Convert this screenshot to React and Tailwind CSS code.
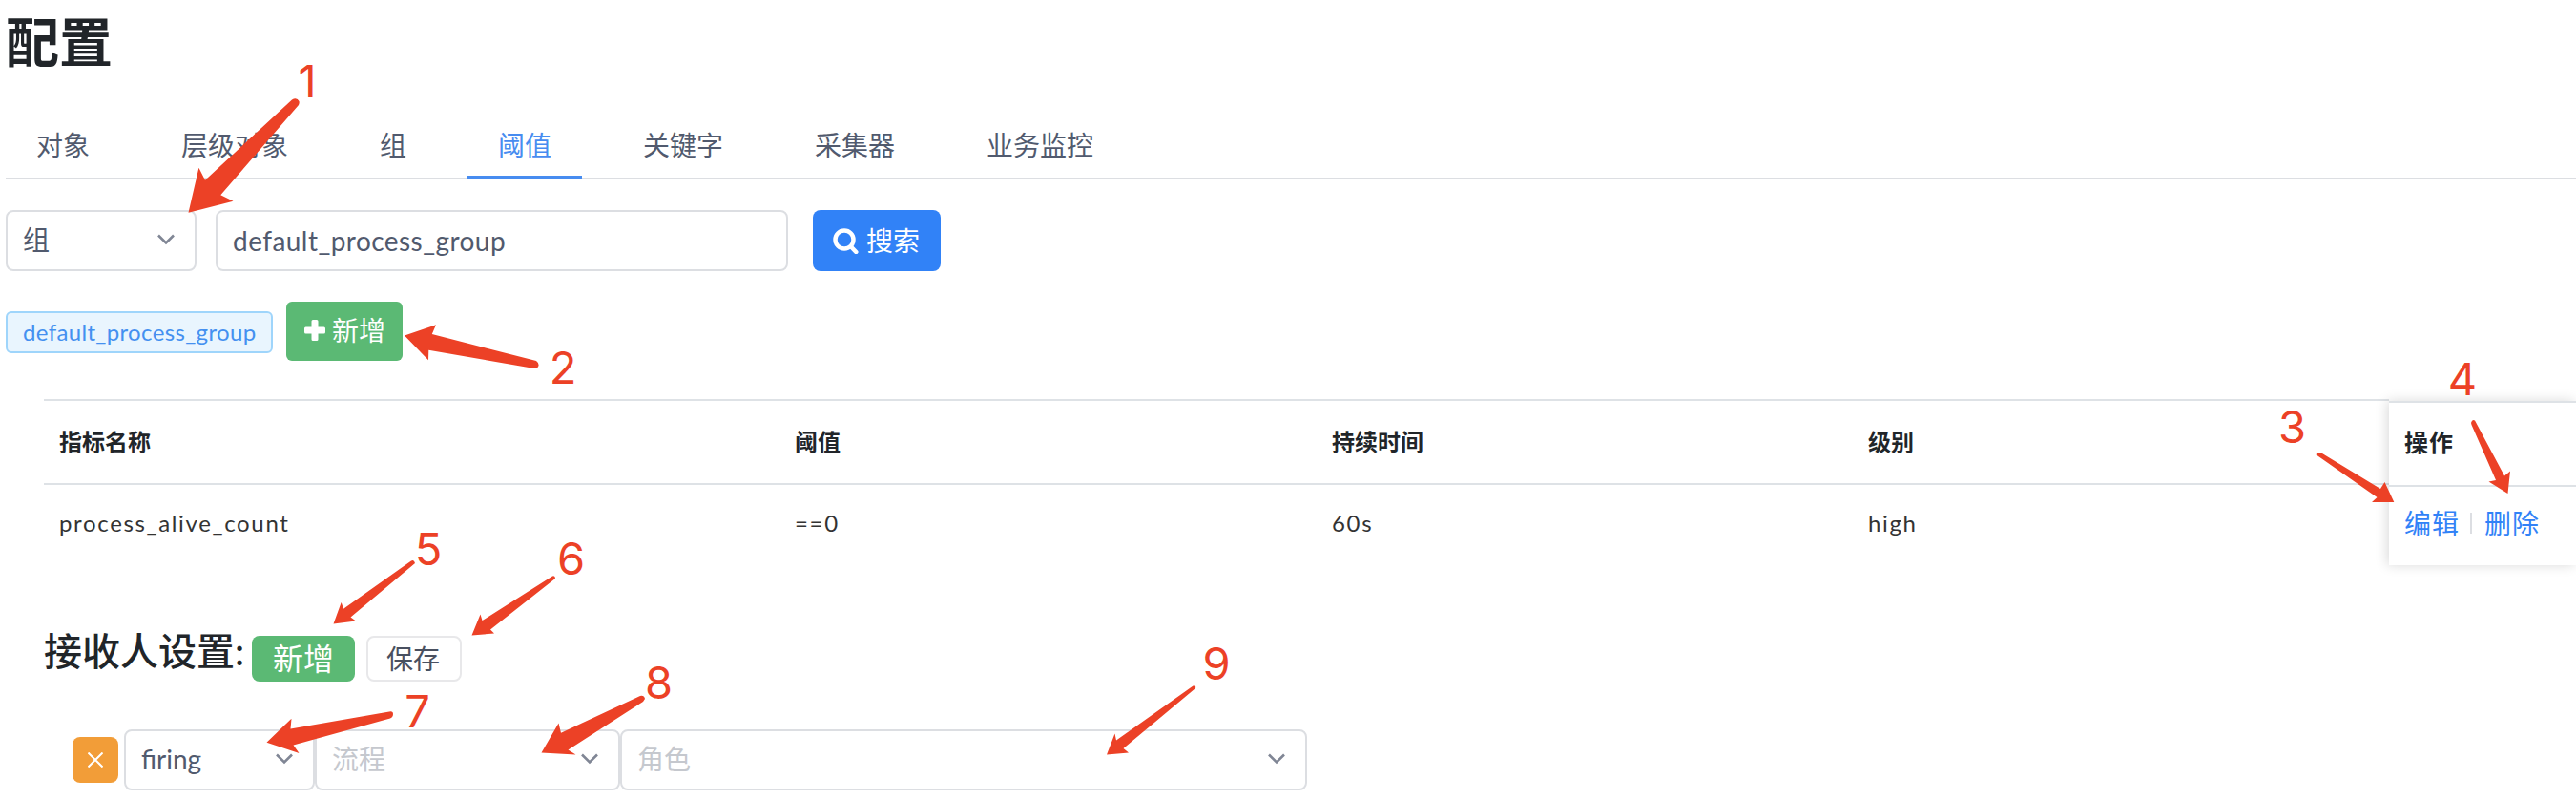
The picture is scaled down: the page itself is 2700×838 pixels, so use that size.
import React from "react";

const TABS = ["对象", "层级对象", "组", "阈值", "关键字", "采集器", "业务监控"];

const MARKS = [
  { n: "1", x: 322, y: 102, d: "M306 104.5Q311 101.500 313.500 106Q314 108 313 110L231.300 204.300L244.500 210.700L197.500 222.700L208.400 175.700L215 188.700Z" },
  { n: "2", x: 590, y: 402, d: "M424 351.500L457 340.300L452.800 350L562 378Q565 380 564.500 383Q563.500 386.500 560 386L449.300 366.700L449 377.300Z" },
  { n: "3", x: 2402.5, y: 464, d: "M2429 475Q2431 473 2434 475L2495 512L2499.500 505L2509.300 526L2486 526L2491.500 521L2430 478Q2428 477 2429 475Z" },
  { n: "4", x: 2581, y: 414, d: "M2590 443Q2591 439 2594 440.500L2625 498.500L2631 493.500L2628.500 517L2608.500 504.500L2616 503L2590.500 445Z" },
  { n: "5", x: 449, y: 592, d: "M431 587.500Q434 586 435 590L367.500 646.500L373 650.500L349.500 653.500L357.700 631L360 637.700Z" },
  { n: "6", x: 598.7, y: 602, d: "M579 603.500Q582 602.500 582 606L514 659.500L518 663.500L494.500 665.500L503.500 643.500L505.500 650Z" },
  { n: "7", x: 437.5, y: 762, d: "M408 745.500Q412 744.500 412 748Q412 751 409 752.500L307.500 780.500L313.500 789L279.500 777.700L305.500 752.700L304.500 763.500Z" },
  { n: "8", x: 690.5, y: 732, d: "M671 729Q675 728 676 732L674 735L595.500 785.500L603.500 790.500L567.500 788.500L585.500 757.500L588 767.700Z" },
  { n: "9", x: 1275, y: 712, d: "M1250.500 718.500Q1254 718 1253 721L1177.500 784L1183 788.500L1160 790.500L1168.500 768.500L1170 775.500Z" },
];

function Chevron() {
  return (
    <svg className="h-[14px] w-[20px] shrink-0" viewBox="0 0 20 14" fill="none" stroke="#808695" strokeWidth="2.6">
      <path d="M2 2.500L10 10.500L18 2.500" />
    </svg>
  );
}

function Select({ width, value, muted }) {
  return (
    <div className={`flex h-16 items-center justify-between rounded-lg border-2 border-[#dcdee2] bg-white pr-[20px] pb-[2px] pl-4 ${width} ${muted ? "text-[#c5c8ce]" : "text-[#515a6e]"}`}>
      <span>{value}</span>
      <Chevron />
    </div>
  );
}

function Annotations() {
  return (
    <svg className="pointer-events-none absolute inset-0 h-[838px] w-[2700px]" viewBox="0 0 2700 838" fill="#ec4126">
      {MARKS.map((m) => (
        <g key={m.n}>
          <path d={m.d} />
          <text x={m.x} y={m.y} textAnchor="middle" className="font-[Inter,sans-serif] text-[47px]">{m.n}</text>
        </g>
      ))}
    </svg>
  );
}

export default function App() {
  return (
    <div className="relative h-[838px] w-[2700px] overflow-hidden bg-white pl-[6px] font-[Lato,'Noto_Sans_CJK_SC',sans-serif] text-[28px] leading-[42px] text-[#515a6e]">
      <h1 className="h-[116px] pt-[10px] text-[56px] leading-[68px] font-bold text-[#212529]">配置</h1>

      <nav className="flex h-[72px] gap-8 border-b-2 border-[#dcdee2]">
        {TABS.map((t) => (
          <div key={t} className={`h-[72px] px-8 pt-[15px] ${t === "阈值" ? "border-b-4 border-[#478cf0] text-[#478cf0]" : ""}`}>{t}</div>
        ))}
      </nav>

      <div className="mt-8 flex">
        <Select width="w-[200px]" value="组" />
        <div className="ml-5 flex h-16 w-[600px] items-center rounded-lg border-2 border-[#dcdee2] pl-4 tracking-[0.45px]">default_process_group</div>
        <button className="ml-[26px] flex h-16 w-[134px] items-center rounded-lg bg-[#3182f7] pl-[21px] text-white">
          <svg className="mr-[8px] h-[27px] w-[27px]" viewBox="0 0 27 27" fill="none" stroke="white" strokeLinecap="round">
            <circle cx="12" cy="12" r="9.500" strokeWidth="4.500" />
            <path d="M19.500 20L24.300 25" strokeWidth="4.500" />
          </svg>
          <span className="pb-[1px]">搜索</span>
        </button>
      </div>

      <div className="mt-8 flex h-[62px]">
        <div className="mt-[10px] flex h-11 w-[280px] items-center rounded-md border-2 border-[#9fd5fb] bg-[#e9f5fe] pl-4 text-[24px] tracking-[0.35px] text-[#4490f0]">default_process_group</div>
        <button className="ml-[14px] flex w-[122px] items-center rounded-md bg-[#5bb974] pl-[19px] text-white">
          <svg className="mr-[7px] mb-[2px] h-[22px] w-[22px]" viewBox="0 0 22 22" fill="white">
            <path d="M9 0h4q1.500 0 1.500 1.500V7.500H20.500Q22 7.500 22 9v4q0 1.500-1.500 1.500H14.500V20.500Q14.500 22 13 22H9Q7.500 22 7.500 20.500V14.500H1.500Q0 14.500 0 13V9Q0 7.500 1.500 7.500H7.500V1.500Q7.500 0 9 0Z" />
          </svg>
          <span className="pb-[2px]">新增</span>
        </button>
      </div>

      <section className="mt-10 ml-10 flex h-[174px] text-[24px]">
        <div className="w-[2458px]">
          <div className="grid h-[90px] grid-cols-[771px_563px_562px_1fr] items-center border-y-2 border-[#dee2e6] pl-4 font-bold text-[#212529]">
            <span>指标名称</span><span>阈值</span><span>持续时间</span><span>级别</span>
          </div>
          <div className="grid h-[80px] grid-cols-[771px_563px_562px_1fr] items-center pb-[1px] pl-4 tracking-[1.65px] text-[#333]">
            <span>process_alive_count</span><span>==0</span><span>60s</span><span>high</span>
          </div>
        </div>
        <div className="mt-[2px] h-[172px] w-[196px] shadow-[-2px_0_12px_rgba(0,0,0,0.15)]">
          <div className="flex h-[90px] items-center border-y-2 border-[#dee2e6] bg-white pb-[5px] pl-4 text-[25px] tracking-[1px] font-bold text-[#212529]">操作</div>
          <div className="flex h-[82px] items-center bg-white pb-[6px] pl-4 text-[28px] tracking-[1px] text-[#3182f7]">
            <span>编辑</span><i className="mr-[13px] ml-[11px] h-[22px] w-[2px] bg-[#dcdee2]" /><span>删除</span>
          </div>
        </div>
      </section>

      <div className="mt-[68px] ml-10 flex h-[54px]">
        <h2 className="w-[218px] text-[40px] leading-[44px] font-medium whitespace-nowrap text-[#212529]">接收人设置:</h2>
        <button className="mt-[6px] h-12 w-[108px] rounded-lg bg-[#5bb974] text-[32px] leading-[46px] text-white">新增</button>
        <button className="mt-[6px] ml-3 h-12 w-[100px] rounded-lg border-2 border-[#e8e8ea] pr-[2px] leading-[42px] text-[#495060]">保存</button>
      </div>

      <div className="mt-[50px] ml-[70px] flex items-center">
        <button className="mr-[6px] flex h-12 w-12 items-center justify-center rounded-lg bg-[#f29d38]">
          <svg className="h-4 w-4" viewBox="0 0 16 16" stroke="white" strokeWidth="2"><path d="M0.500 0.500L15.500 15.500M15.500 0.500L0.500 15.500" /></svg>
        </button>
        <Select width="w-[200px]" value="firing" />
        <Select width="w-[320px]" value="流程" muted />
        <Select width="w-[720px]" value="角色" muted />
      </div>

      <Annotations />
    </div>
  );
}
